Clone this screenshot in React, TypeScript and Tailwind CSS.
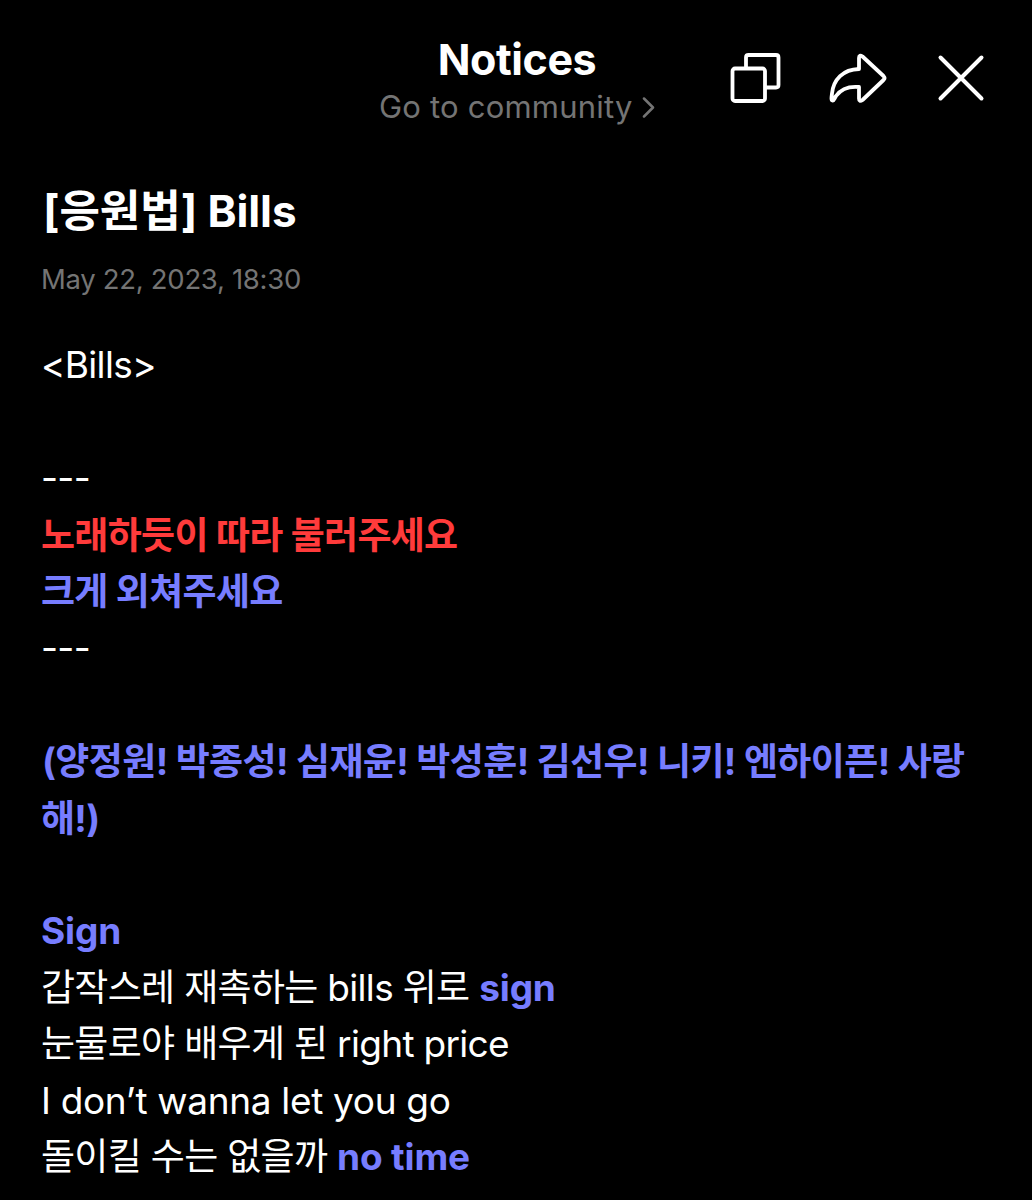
import type { ReactNode } from 'react';

function Line({ children, className = '' }: { children?: ReactNode; className?: string }) {
  return <div className={`h-[56.6px] whitespace-nowrap ${className}`}>{children}</div>;
}

function Shout({ children }: { children: ReactNode }) {
  return <span className="font-bold tracking-[-0.15px] text-[#777dff]">{children}</span>;
}

export default function App() {
  return (
    <main className="h-[1200px] w-[1032px] overflow-hidden bg-black font-['Inter','Noto_Sans_CJK_KR',sans-serif] text-white">
      <header className="flex h-[170px] items-start pt-[36px]">
        <div className="ml-[379px] w-[276px]">
          <h1 className="text-center text-[43px] leading-[46px] font-bold tracking-[-0.45px]">Notices</h1>
          <div className="flex items-center justify-between text-[31px] leading-[50px] text-[#747474]">
            <span className="tracking-[0.2px] whitespace-nowrap">Go to community</span>
            <svg width="14" height="22" viewBox="0 0 14 22" fill="none" stroke="currentColor" strokeWidth="2.5" strokeLinecap="round" strokeLinejoin="round"><path d="M3 2.500l9 9-9 9" /></svg>
          </div>
        </div>
        <svg className="mt-[16px] ml-[73px]" width="54" height="54" viewBox="728 52 54 54" fill="none" stroke="white" strokeWidth="3.8" strokeLinejoin="round"><path d="M746 68V57.500q0-2.500 2.500-2.500h27.500q2.500 0 2.500 2.500v27.500q0 2.500-2.500 2.500h-10" /><rect x="732.5" y="68.500" width="32.500" height="32.500" rx="2.500" /></svg>
        <svg className="mt-[16px] ml-[46px]" width="60" height="54" viewBox="828 52 60 54" fill="none" stroke="white" strokeWidth="3.8" strokeLinejoin="round"><path d="M859 58q0-4 3.500-1.500l21 19.500q2 2 0 4l-21 20q-3.500 2.500-3.500-1.500V87c-11-1-18 2-23 9-1.500 2-2 5-3.500 4.500-1.500 0-1-3-.5-7 1.500-14 11-24 27-24.500z" /></svg>
        <svg className="mt-[16px] ml-[48px]" width="50" height="54" viewBox="936 52 50 54" fill="none" stroke="white" strokeWidth="4" strokeLinecap="round"><path d="M940.500 57.500l41 41M981.500 57.500l-41 41" /></svg>
      </header>
      <article className="pl-[41px]">
        <h2 className="h-[84px] pl-[2px] text-[44px] leading-[83px] font-bold tracking-[-0.1px]">[응원법] Bills</h2>
        <time className="block h-[50px] text-[27.5px] leading-[50px] tracking-[-0.3px] text-[#747474]">May 22, 2023, 18:30</time>
        <section className="mt-[33px] text-[37px] leading-[56.6px] tracking-[-0.68px]">
          <Line>&lt;Bills&gt;</Line>
          <Line />
          <Line>---</Line>
          <Line className="leading-[58.6px] font-bold text-[#ff3b3b]">노래하듯이 따라 불러주세요</Line>
          <Line className="leading-[58.6px] font-bold text-[#777dff]">크게 외쳐주세요</Line>
          <Line>---</Line>
          <Line />
          <Line className="pl-px leading-[58.6px] font-bold tracking-[-0.61px] text-[#777dff]">(양정원! 박종성! 심재윤! 박성훈! 김선우! 니키! 엔하이픈! 사랑</Line>
          <Line className="leading-[58.6px] font-bold text-[#777dff]">해!)</Line>
          <Line />
          <Line><Shout>Sign</Shout></Line>
          <Line>갑작스레 재촉하는 bills 위로 <Shout>sign</Shout></Line>
          <Line>눈물로야 배우게 된 right price</Line>
          <Line className="tracking-[-0.33px]">I don’t wanna let you go</Line>
          <Line>돌이킬 수는 없을까 <Shout>no time</Shout></Line>
        </section>
      </article>
    </main>
  );
}
